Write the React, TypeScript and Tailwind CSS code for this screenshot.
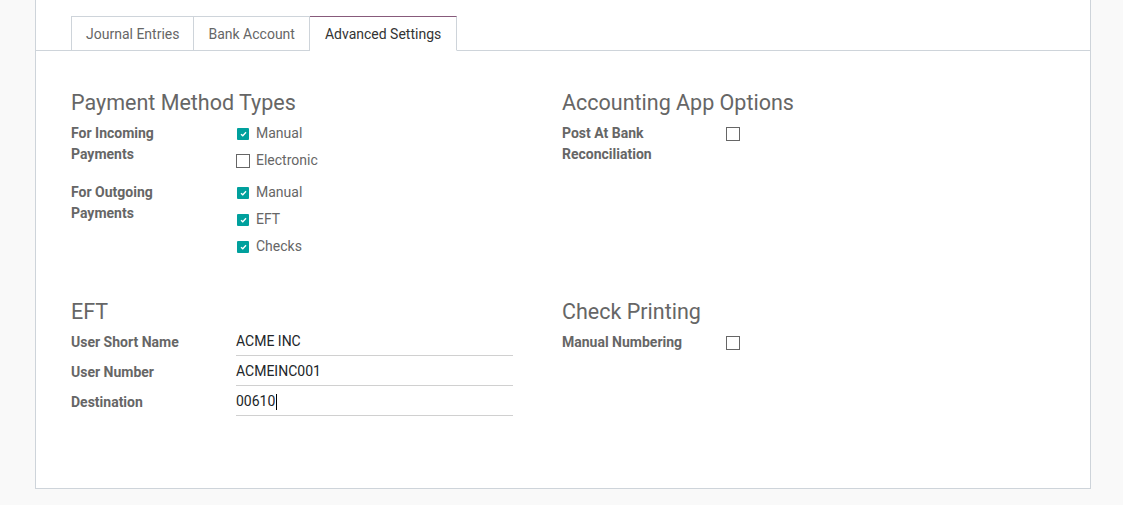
import React from 'react'

const font = { fontFamily: 'Roboto, "Noto Sans", sans-serif' }

function Check({ checked }: { checked: boolean }) {
  if (checked) {
    return (
      <span className="flex h-[12px] w-[12px] items-center justify-center rounded-[1px] bg-[#00a09d]">
        <svg width="7" height="6" viewBox="0 0 7 6" fill="none">
          <path d="M1 3.2 L2.8 4.8 L6 1.2" stroke="white" strokeWidth="1.3" />
        </svg>
      </span>
    )
  }
  return <span className="block h-[14px] w-[14px] border border-[#666] bg-white" />
}

function CheckRow({ label, checked }: { label: string; checked: boolean }) {
  return (
    <div className="flex h-[21px] items-center">
      <div className="flex w-[14px] justify-center">
        <Check checked={checked} />
      </div>
      <span className="ml-[6px] text-[14px] text-[#666]">{label}</span>
    </div>
  )
}

function Label({ children, narrow }: { children: React.ReactNode; narrow?: boolean }) {
  return (
    <div
      className={
        narrow
          ? 'w-[164px] shrink-0 text-[14px] font-bold leading-[21px] text-[#666]'
          : 'w-[165px] shrink-0 text-[14px] font-bold leading-[21px] text-[#666]'
      }
    >
      {children}
    </div>
  )
}

function Heading({ children }: { children: React.ReactNode }) {
  return <h2 className="mb-[8px] text-[21.5px] leading-[24px] text-[#666]">{children}</h2>
}

function Field({ label, value, cursor }: { label: string; value: string; cursor?: boolean }) {
  return (
    <div className="flex h-[28px] items-center">
      <div className="pt-[1px]">
        <Label>{label}</Label>
      </div>
      <div className="flex h-[28px] w-[277px] items-center border-b border-[#d0d0d0] text-[14px] text-[#212529]">
        {value}
        {cursor && <span className="ml-[1px] inline-block h-[16px] w-px bg-black" />}
      </div>
    </div>
  )
}

export default function App() {
  return (
    <div className="h-[505px] w-full bg-[#f9f9f9] pl-[35px] pr-[32px]" style={font}>
      <div className="h-[489px] border border-t-0 border-[#ced4da] bg-white">
        <div className="flex border-b border-[#ced4da] px-[35px] pt-[16px]">
          <div className="-mb-px flex h-[35px] items-center border border-[#ced4da] border-b-transparent px-[14px] pt-[2px] text-[14px] text-[#666]">
            Journal Entries
          </div>
          <div className="-mb-px flex h-[35px] items-center border border-l-0 border-[#ced4da] border-b-transparent px-[14px] pt-[2px] text-[14px] text-[#666]">
            Bank Account
          </div>
          <div className="-mb-px flex h-[35px] items-center border border-l-0 border-[#ced4da] border-t-[#875a7b] border-b-white bg-white px-[15px] pt-[2px] text-[14px] text-[#333]">
            Advanced Settings
          </div>
        </div>

        <div className="grid grid-cols-[491px_1fr] px-[35px] pt-[40px]">
          <div>
            <Heading>Payment Method Types</Heading>
            <div className="flex">
              <Label>
                For Incoming
                <br />
                Payments
              </Label>
              <div className="flex flex-col gap-[6px]">
                <CheckRow label="Manual" checked />
                <CheckRow label="Electronic" checked={false} />
              </div>
            </div>
            <div className="mt-[11px] flex">
              <Label>
                For Outgoing
                <br />
                Payments
              </Label>
              <div className="flex flex-col gap-[6px]">
                <CheckRow label="Manual" checked />
                <CheckRow label="EFT" checked />
                <CheckRow label="Checks" checked />
              </div>
            </div>
          </div>
          <div>
            <Heading>Accounting App Options</Heading>
            <div className="flex">
              <Label narrow>
                Post At Bank
                <br />
                Reconciliation
              </Label>
              <div className="flex h-[21px] items-center">
                <Check checked={false} />
              </div>
            </div>
          </div>

          <div className="mt-[43px]">
            <Heading>EFT</Heading>
            <div className="-mt-[4px] flex flex-col gap-[2px]">
              <Field label="User Short Name" value="ACME INC" />
              <Field label="User Number" value="ACMEINC001" />
              <Field label="Destination" value="00610" cursor />
            </div>
          </div>
          <div className="mt-[43px]">
            <Heading>Check Printing</Heading>
            <div className="-mt-[4px] flex h-[28px] items-center pt-[1px]">
              <Label narrow>Manual Numbering</Label>
              <Check checked={false} />
            </div>
          </div>
        </div>
      </div>
    </div>
  )
}
